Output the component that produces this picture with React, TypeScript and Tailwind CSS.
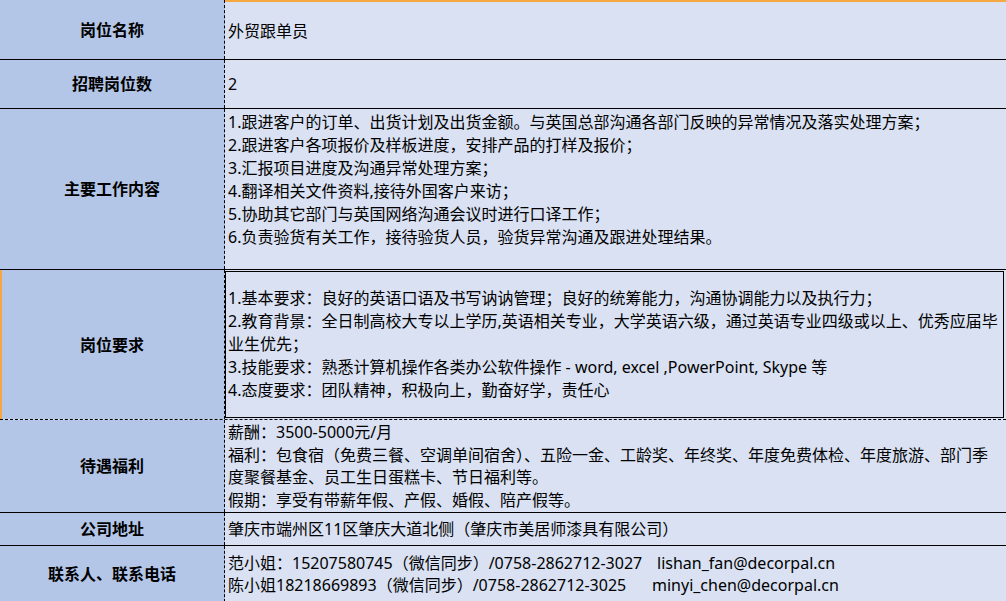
import * as React from 'react'

const font = { fontFamily: '"Noto Sans", "Noto Sans CJK SC", sans-serif' }

function Row({
  label,
  h,
  dashed,
  leftClass = '',
  rightClass = '',
  children,
}: {
  label: string
  h: string
  dashed?: boolean
  leftClass?: string
  rightClass?: string
  children: React.ReactNode
}) {
  return (
    <div className={`flex box-border ${h} ${dashed ? 'border-b border-dashed' : 'border-b'} border-black`}>
      <div
        className={`w-[225px] shrink-0 flex items-center justify-center bg-[#b4c6e7] border-r border-dashed border-black font-bold text-[16px] text-black ${leftClass}`}
      >
        {label}
      </div>
      <div className={`flex-1 min-w-0 bg-[#d9e1f2] text-[16px] text-black pl-[3px] overflow-hidden whitespace-nowrap ${rightClass}`}>
        {children}
      </div>
    </div>
  )
}

export default function App() {
  return (
    <main className="w-[1006px] h-[601px] overflow-hidden bg-[#d9e1f2]" style={font}>
      <Row label="岗位名称" h="h-[60px]" rightClass="flex items-center border-t-2 border-[#f4a83f]">
        外贸跟单员
      </Row>
      <Row label="招聘岗位数" h="h-[49px]" rightClass="flex items-center">
        2
      </Row>
      <Row label="主要工作内容" h="h-[161px]" rightClass="pt-[2px] leading-[23px]">
        <div>1.跟进客户的订单、出货计划及出货金额。与英国总部沟通各部门反映的异常情况及落实处理方案；</div>
        <div>2.跟进客户各项报价及样板进度，安排产品的打样及报价；</div>
        <div>3.汇报项目进度及沟通异常处理方案；</div>
        <div>4.翻译相关文件资料,接待外国客户来访；</div>
        <div>5.协助其它部门与英国网络沟通会议时进行口译工作；</div>
        <div>6.负责验货有关工作，接待验货人员，验货异常沟通及跟进处理结果。</div>
      </Row>
      <Row label="岗位要求" h="h-[150px]" dashed leftClass="shadow-[inset_2px_0_0_#f4a83f]" rightClass="!pl-0 p-[1px]">
        <div className="h-full box-border border border-black pl-[2px] flex flex-col justify-center leading-[23px] mr-[1px]">
          <div>1.基本要求：良好的英语口语及书写讷讷管理；良好的统筹能力，沟通协调能力以及执行力；</div>
          <div>2.教育背景：全日制高校大专以上学历,英语相关专业，大学英语六级，通过英语专业四级或以上、优秀应届毕</div>
          <div>业生优先；</div>
          <div>3.技能要求：熟悉计算机操作各类办公软件操作 - word, excel ,PowerPoint, Skype 等</div>
          <div>4.态度要求：团队精神，积极向上，勤奋好学，责任心</div>
        </div>
      </Row>
      <Row label="待遇福利" h="h-[93px]" rightClass="flex flex-col justify-center leading-[22.5px]">
        <div>薪酬：3500-5000元/月</div>
        <div>福利：包食宿（免费三餐、空调单间宿舍）、五险一金、工龄奖、年终奖、年度免费体检、年度旅游、部门季</div>
        <div>度聚餐基金、员工生日蛋糕卡、节日福利等。</div>
        <div>假期：享受有带薪年假、产假、婚假、陪产假等。</div>
      </Row>
      <Row label="公司地址" h="h-[33px]" rightClass="flex items-center">
        肇庆市端州区11区肇庆大道北侧（肇庆市美居师漆具有限公司）
      </Row>
      <Row label="联系人、联系电话" h="h-[57px]" rightClass="flex flex-col justify-center leading-[22px]">
        <div className="flex">
          <span className="w-[429px] shrink-0">范小姐：15207580745（微信同步）/0758-2862712-3027</span>
          <span>lishan_fan@decorpal.cn</span>
        </div>
        <div className="flex">
          <span className="w-[424px] shrink-0">陈小姐18218669893（微信同步）/0758-2862712-3025</span>
          <span>minyi_chen@decorpal.cn</span>
        </div>
      </Row>
    </main>
  )
}
